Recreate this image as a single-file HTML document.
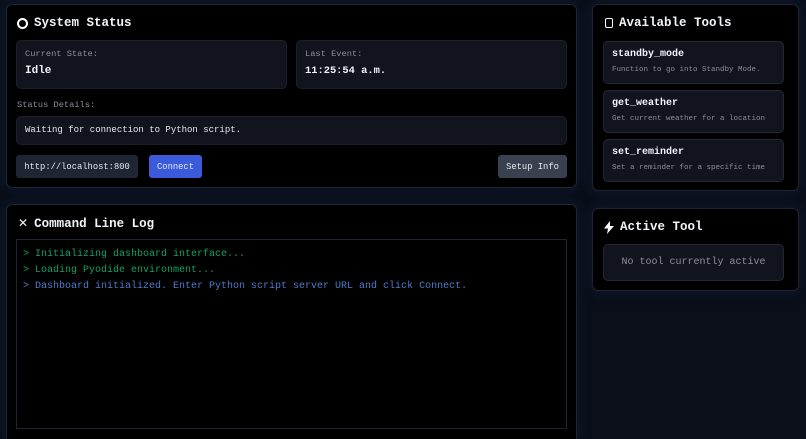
<!DOCTYPE html><html><head><style>
*{box-sizing:border-box;margin:0;padding:0}
html,body{width:806px;height:439px;overflow:hidden}
body{background:#0a0f1a;font-family:"Liberation Mono",monospace;color:#e5e7eb;position:relative}
.p{position:absolute;background:#000;border:1px solid #1c2436;border-radius:6px;box-shadow:0 0 14px rgba(30,50,90,.35)}
.t{position:absolute;font-weight:bold;font-size:12.5px;color:#f1f5f9;display:flex;align-items:center;gap:6px}
.b{position:absolute;background:#11141c;border:1px solid #1a1f2b;border-radius:5px}
.l{font-size:8.7px;color:#8a8f99}
.v{font-weight:bold;color:#f1f5f9}
.btn{position:absolute;border-radius:3px;font-size:8.8px;display:flex;align-items:center;justify-content:center}
.tc{position:absolute;left:10px;width:181px;height:43px;background:#11141c;border:1px solid #222836;border-radius:5px;padding:7px 8px}
.tc b{display:block;font-size:10px;color:#f1f5f9}
.tc span{display:block;font-size:7.5px;color:#8a8f99;margin-top:6px;white-space:nowrap}
</style></head><body>
<div class="p" style="left:6px;top:4px;width:571px;height:184px">
 <div class="t" style="left:10px;top:11px"><span style="width:11px;height:11px;border:2px solid #fff;border-radius:50%;display:inline-block"></span>System Status</div>
 <div class="b" style="left:9px;top:35px;width:271px;height:49px;padding:8px"><div class="l">Current State:</div><div class="v" style="margin-top:6px;font-size:11px">Idle</div></div>
 <div class="b" style="left:289px;top:35px;width:271px;height:49px;padding:8px"><div class="l">Last Event:</div><div class="v" style="margin-top:6px;font-size:10.4px">11:25:54 a.m.</div></div>
 <div class="l" style="position:absolute;left:10px;top:95px">Status Details:</div>
 <div class="b" style="left:9px;top:111px;width:551px;height:29px;padding:0 8px;font-size:9px;line-height:27px;color:#e5e7eb">Waiting for connection to Python script.</div>
 <div class="btn" style="left:9px;top:150px;width:122px;height:23px;background:#1f2633;color:#e5e7eb">http://localhost:800</div>
 <div class="btn" style="left:142px;top:150px;width:53px;height:23px;background:#3b5bdb;color:#e0e7ff">Connect</div>
 <div class="btn" style="left:491px;top:150px;width:69px;height:23px;background:#394150;color:#e5e7eb">Setup Info</div>
</div>
<div class="p" style="left:6px;top:204px;width:571px;height:240px">
 <div class="t" style="left:11px;top:11px"><span style="font-weight:normal;font-size:12px">✕</span>Command Line Log</div>
 <div style="position:absolute;left:9px;top:34px;width:551px;height:190px;border:1px solid #1f2633;padding:7px 6px;font-size:10px;line-height:16px">
  <div style="color:#16a068">&gt; Initializing dashboard interface...</div>
  <div style="color:#16a068">&gt; Loading Pyodide environment...</div>
  <div style="color:#4d7cc9">&gt; Dashboard initialized. Enter Python script server URL and click Connect.</div>
 </div>
</div>
<div class="p" style="left:592px;top:4px;width:207px;height:187px">
 <div class="t" style="left:12px;top:11px"><span style="width:8px;height:10px;border:1.5px solid #fff;border-radius:2px;display:inline-block"></span>Available Tools</div>
 <div class="tc" style="top:36px"><b>standby_mode</b><span>Function to go into Standby Mode.</span></div>
 <div class="tc" style="top:85px"><b>get_weather</b><span>Get current weather for a location</span></div>
 <div class="tc" style="top:134px"><b>set_reminder</b><span>Set a reminder for a specific time</span></div>
</div>
<div class="p" style="left:592px;top:208px;width:207px;height:83px">
 <div class="t" style="left:11px;top:11px"><svg width="10" height="13" viewBox="0 0 10 13"><path d="M6 0L0 7.5h4L3 13 10 5H6z" fill="#fff"/></svg>Active Tool</div>
 <div class="b" style="left:10px;top:35px;width:181px;height:37px;display:flex;align-items:center;justify-content:center;font-size:10px;color:#8a8f99;border-color:#222836">No tool currently active</div>
</div>
</body></html>
